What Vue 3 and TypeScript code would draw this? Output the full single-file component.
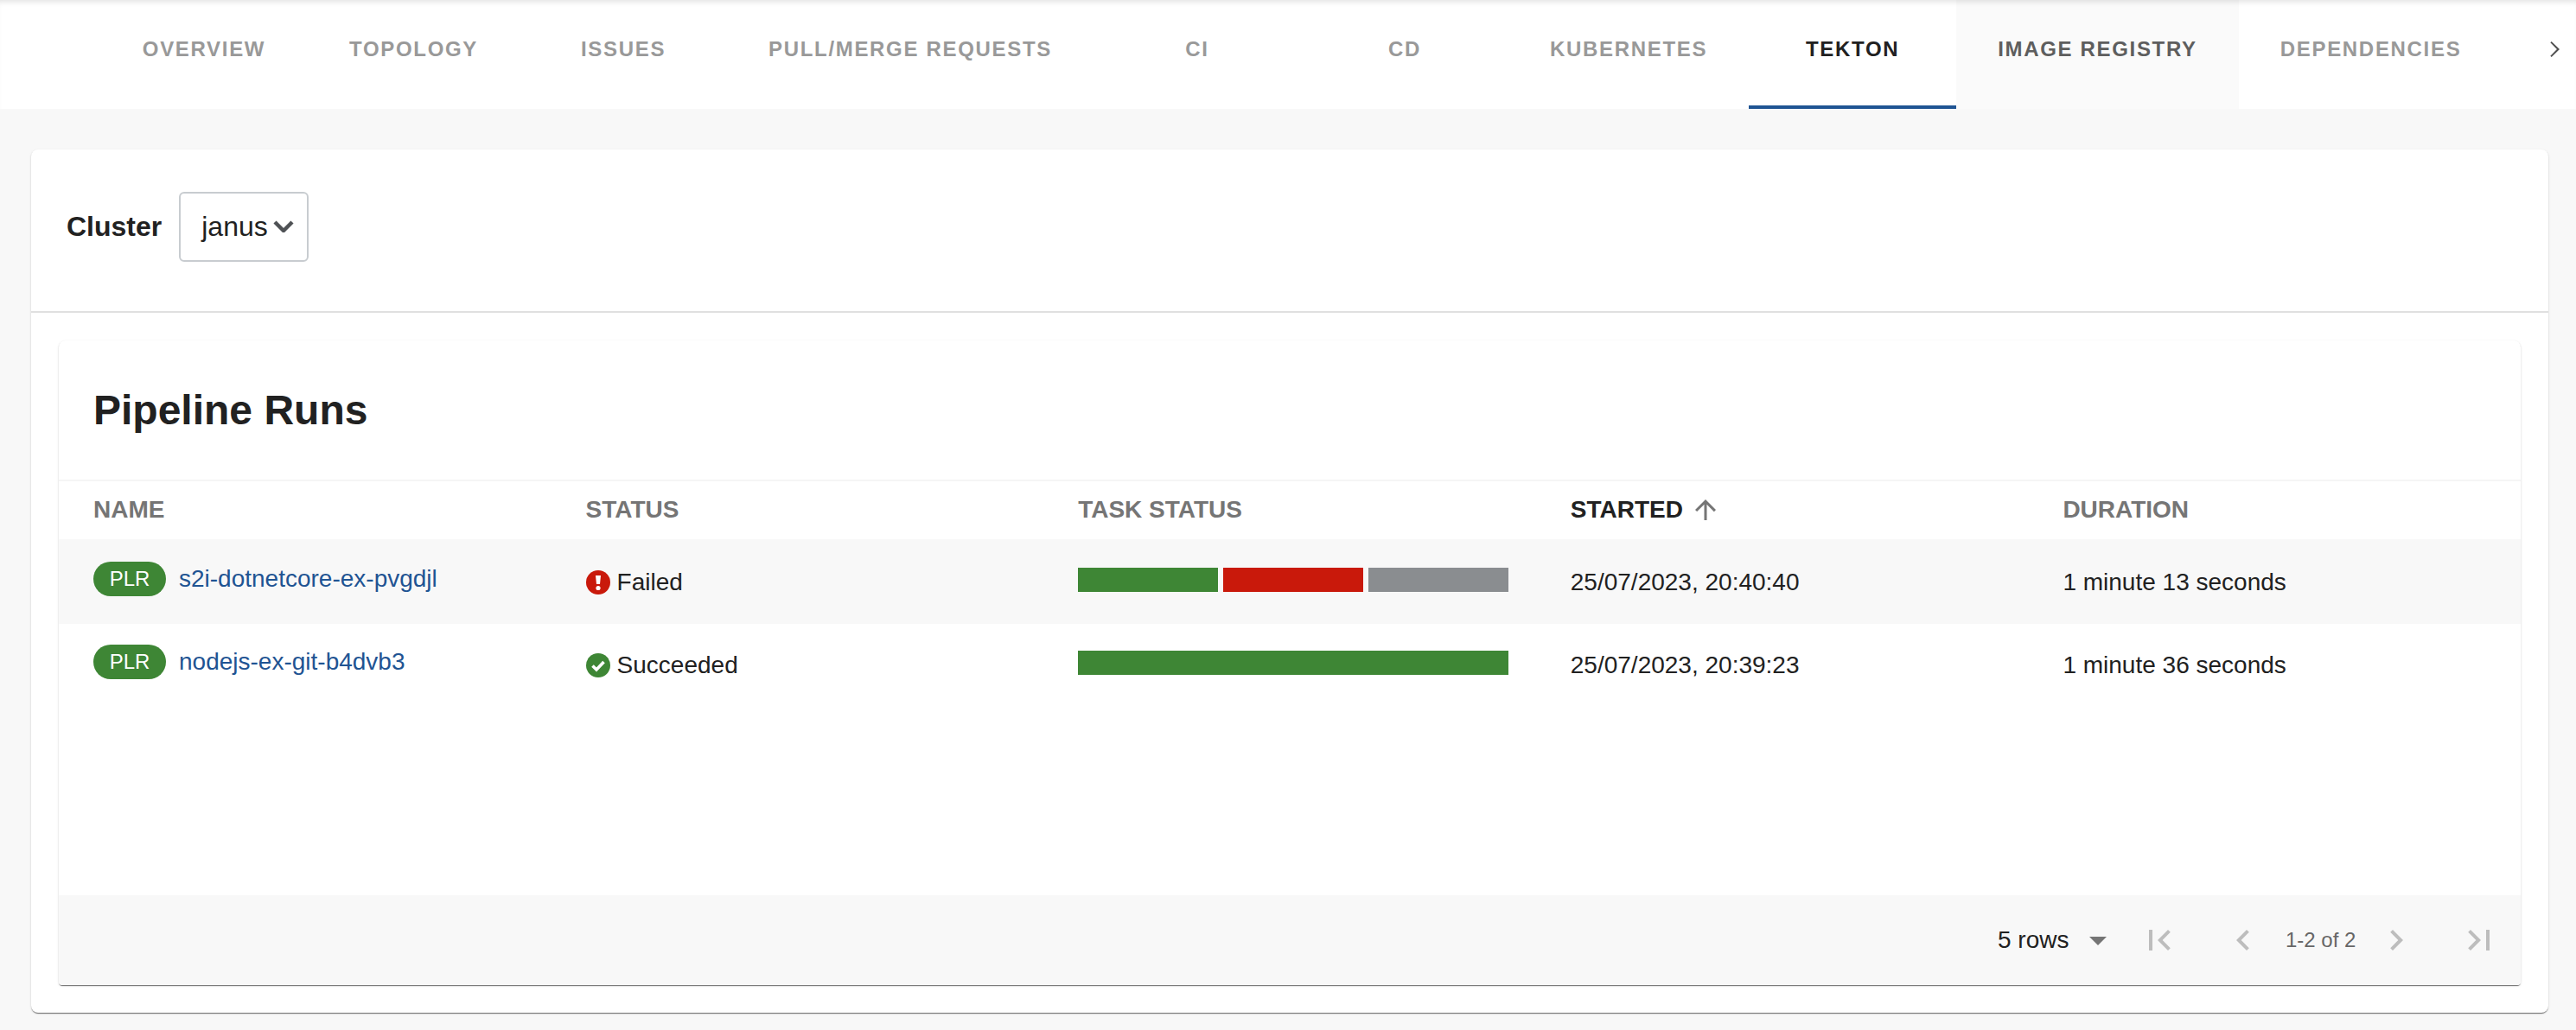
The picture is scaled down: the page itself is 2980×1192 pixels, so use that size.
<script setup lang="ts">
interface Tab {
  label: string
  active?: boolean
  hover?: boolean
}

interface PipelineRun {
  name: string
  status: 'Failed' | 'Succeeded'
  tasks: string[]
  started: string
  duration: string
}

const tabs: Tab[] = [
  { label: 'Overview' },
  { label: 'Topology' },
  { label: 'Issues' },
  { label: 'Pull/Merge Requests' },
  { label: 'CI' },
  { label: 'CD' },
  { label: 'Kubernetes' },
  { label: 'Tekton', active: true },
  { label: 'Image Registry', hover: true },
  { label: 'Dependencies' }
]

const columns = ['Name', 'Status', 'Task Status', 'Started', 'Duration']

const runs: PipelineRun[] = [
  {
    name: 's2i-dotnetcore-ex-pvgdjl',
    status: 'Failed',
    tasks: ['#3e8635', '#c9190b', '#8a8d90'],
    started: '25/07/2023, 20:40:40',
    duration: '1 minute 13 seconds'
  },
  {
    name: 'nodejs-ex-git-b4dvb3',
    status: 'Succeeded',
    tasks: ['#3e8635'],
    started: '25/07/2023, 20:39:23',
    duration: '1 minute 36 seconds'
  }
]
</script>

<template>
  <div class="page">
    <nav class="tabs">
      <a
        v-for="tab in tabs"
        :key="tab.label"
        class="tab"
        :class="{ 'tab--active': tab.active, 'tab--hover': tab.hover }"
      >{{ tab.label }}</a>
      <span class="tabs__next">
        <svg viewBox="0 0 24 24" width="40" height="40"><path d="M8.59 16.59L13.17 12 8.59 7.41 9.4 6.6 15 12l-5.6 5.4-.81-.81z" /></svg>
      </span>
    </nav>

    <main class="content">
      <section class="card">
        <div class="toolbar">
          <label class="toolbar__label">Cluster</label>
          <div class="select">
            <span>janus</span>
            <svg viewBox="0 0 24 14" width="24" height="14" fill="none" stroke="#4f5255" stroke-width="4.4"><path d="M2 2l10 10L22 2" /></svg>
          </div>
        </div>

        <div class="panel">
          <h2 class="panel__title">Pipeline Runs</h2>

          <div class="row row--head">
            <div
              v-for="col in columns"
              :key="col"
              class="head-cell"
              :class="{ 'head-cell--sorted': col === 'Started' }"
            >
              {{ col }}
              <svg v-if="col === 'Started'" class="sort" viewBox="0 0 24 24" width="36" height="36"><path d="M4 12l1.41 1.41L11 7.83V20h2V7.83l5.58 5.59L20 12l-8-8-8 8z" /></svg>
            </div>
          </div>

          <div class="rows">
            <div v-for="run in runs" :key="run.name" class="row row--body">
              <div class="cell cell--name">
                <span class="chip">PLR</span>
                <a class="link">{{ run.name }}</a>
              </div>
              <div class="cell cell--text">
                <svg v-if="run.status === 'Failed'" class="status-icon" viewBox="0 0 28 28">
                  <circle cx="14" cy="14" r="14" fill="#c9190b" />
                  <path d="M11 6h6l-1 10h-4z" fill="#fff" />
                  <circle cx="14" cy="20.5" r="2.6" fill="#fff" />
                </svg>
                <svg v-else class="status-icon" viewBox="0 0 28 28">
                  <circle cx="14" cy="14" r="14" fill="#3e8635" />
                  <path d="M7.5 14.5l4.5 4.5 8.5-9" fill="none" stroke="#fff" stroke-width="3.6" />
                </svg>
                {{ run.status }}
              </div>
              <div class="cell">
                <div class="bar">
                  <span
                    v-for="(color, i) in run.tasks"
                    :key="i"
                    class="bar__seg"
                    :style="{ background: color }"
                  ></span>
                </div>
              </div>
              <div class="cell cell--text">{{ run.started }}</div>
              <div class="cell cell--text">{{ run.duration }}</div>
            </div>
          </div>

          <footer class="pager">
            <span class="pager__rows">5 rows</span>
            <svg class="pager__drop" viewBox="0 0 24 24" width="48" height="48"><path d="M7 10l5 5 5-5z" /></svg>
            <svg class="pager__first" viewBox="0 0 24 24" width="48" height="48"><path d="M18.41 16.59L13.82 12l4.59-4.59L17 6l-6 6 6 6zM6 6h2v12H6z" /></svg>
            <svg class="pager__prev" viewBox="0 0 24 24" width="48" height="48"><path d="M15.41 16.59L10.83 12l4.58-4.59L14 6l-6 6 6 6 1.41-1.41z" /></svg>
            <span class="pager__count">1-2 of 2</span>
            <svg class="pager__next" viewBox="0 0 24 24" width="48" height="48"><path d="M8.59 16.59L13.17 12 8.59 7.41 10 6l6 6-6 6-1.41-1.41z" /></svg>
            <svg class="pager__last" viewBox="0 0 24 24" width="48" height="48"><path d="M5.59 7.41L10.18 12l-4.59 4.59L7 18l6-6-6-6zM16 6h2v12h-2z" /></svg>
          </footer>
        </div>
      </section>
    </main>
  </div>
</template>

<style>
html,
body {
  margin: 0;
  background: #f8f8f8;
}
</style>

<style scoped>
.page {
  width: 2980px;
  height: 1192px;
  overflow: hidden;
  background: #f8f8f8;
  font-family: 'Liberation Sans', Arial, sans-serif;
  color: #212121;
}

.tabs {
  display: flex;
  height: 126px;
  padding-left: 116px;
  box-sizing: border-box;
  background: #fff;
  box-shadow: inset 0 6px 6px -4px rgba(0, 0, 0, 0.12);
}

.tab {
  box-sizing: border-box;
  min-width: 240px;
  padding: 42px 48px 0;
  font-size: 24px;
  line-height: 30px;
  font-weight: 700;
  letter-spacing: 1.68px;
  text-align: center;
  text-transform: uppercase;
  white-space: nowrap;
  color: #999;
}

.tab--active {
  color: #212121;
  border-bottom: 4px solid #1f5493;
}

.tab--hover {
  color: #5e5e5e;
  background: rgba(0, 0, 0, 0.02);
}

.tabs__next {
  display: flex;
  align-items: flex-start;
  margin-left: auto;
  padding: 37px 4px 0 0;
}

.tabs__next svg {
  fill: #4f4f4f;
}

.content {
  padding: 47px 32px 0 36px;
}

.card {
  height: 999px;
  box-sizing: border-box;
  background: #fff;
  border-radius: 8px;
  box-shadow: 0 2px 1px -1px rgba(0, 0, 0, 0.4), 0 1px 1px 0 rgba(0, 0, 0, 0.2), 0 1px 3px 0 rgba(0, 0, 0, 0.12);
}

.toolbar {
  display: flex;
  align-items: center;
  gap: 20px;
  height: 189px;
  box-sizing: border-box;
  padding: 0 0 9px 41px;
  border-bottom: 2px solid #e0e0e0;
}

.toolbar__label {
  font-size: 32px;
  font-weight: 700;
}

.select {
  display: flex;
  align-items: center;
  gap: 6px;
  width: 150px;
  height: 81px;
  box-sizing: border-box;
  padding: 0 0 0 24px;
  border: 2px solid #c8ccd0;
  border-radius: 6px;
  font-size: 32px;
}

.panel {
  display: flex;
  flex-direction: column;
  margin: 32px 32px 0;
  height: 746px;
  background: #fff;
  border-radius: 8px 8px 4px 4px;
  box-shadow: 0 2px 1px -1px rgba(0, 0, 0, 0.4), 0 1px 1px 0 rgba(0, 0, 0, 0.2), 0 1px 3px 0 rgba(0, 0, 0, 0.12);
}

.panel__title {
  margin: 0;
  height: 163px;
  box-sizing: border-box;
  padding: 53px 0 0 40px;
  font-size: 48px;
  line-height: 56px;
  font-weight: 700;
  border-bottom: 2px solid #f5f5f5;
}

.row {
  display: grid;
  grid-template-columns: repeat(5, 1fr);
}

.row--head {
  height: 67px;
  align-items: center;
}

.head-cell {
  display: flex;
  align-items: center;
  gap: 8px;
  padding-left: 40px;
  padding-bottom: 2px;
  height: 36px;
  font-size: 28px;
  font-weight: 700;
  text-transform: uppercase;
  color: #757575;
}

.head-cell--sorted {
  color: #212121;
}

.sort {
  fill: #757575;
}

.rows {
  flex: 1;
}

.row--body {
  height: 98px;
  box-sizing: border-box;
  padding-bottom: 4px;
}

.row--body:nth-child(odd) {
  background: #f8f8f8;
}

.row--body:nth-child(even) {
  padding-bottom: 8px;
}

.cell {
  display: flex;
  align-items: center;
  padding-left: 40px;
  font-size: 28px;
}

.cell--text {
  padding-top: 6px;
}

.cell--name {
  gap: 15px;
  padding-bottom: 2px;
}

.chip {
  display: flex;
  align-items: center;
  justify-content: center;
  width: 84px;
  height: 40px;
  border-radius: 20px;
  background: #3e8635;
  color: #fff;
  font-size: 24px;
}

.link {
  color: #1f5493;
}

.status-icon {
  flex: none;
  width: 28px;
  height: 28px;
  margin-right: 8px;
}

.bar {
  display: flex;
  gap: 6px;
  width: 498px;
  height: 28px;
}

.bar__seg {
  flex: 1;
}

.pager {
  display: flex;
  align-items: center;
  height: 104px;
  background: #f8f8f8;
  border-radius: 0 0 4px 4px;
  padding-left: 2243px;
}

.pager svg {
  flex: none;
  fill: #bdbdbd;
}

.pager__rows {
  width: 92px;
  font-size: 28px;
  white-space: nowrap;
}

.pager svg.pager__drop {
  fill: #757575;
}

.pager__first {
  margin-left: 23px;
}

.pager__prev {
  margin-left: 49px;
}

.pager__count {
  width: 129px;
  box-sizing: border-box;
  padding-left: 25px;
  font-size: 24px;
  color: #666;
  white-space: nowrap;
}

.pager__last {
  margin-left: 48px;
}
</style>
